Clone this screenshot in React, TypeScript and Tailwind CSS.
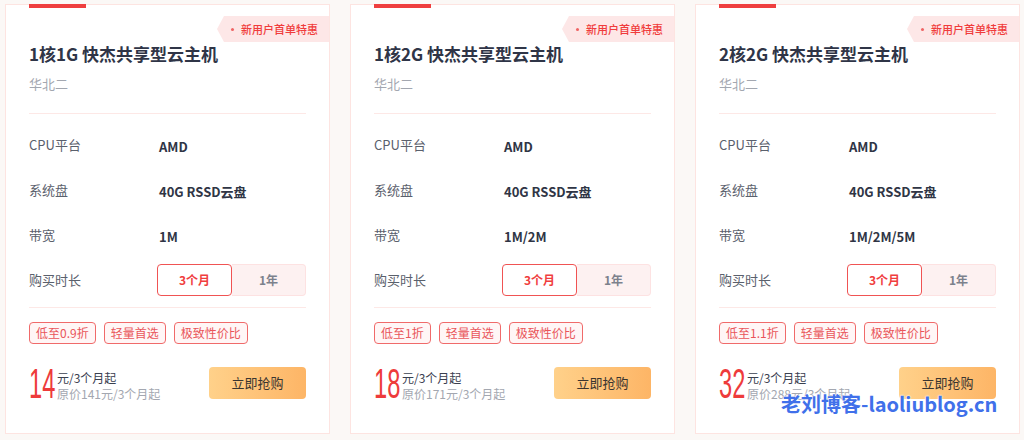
import React from "react";

type Plan = {
  title: string;
  bandwidth: string;
  discount: string;
  price: string;
  original: string;
};

const PLANS: Plan[] = [
  { title: "1核1G 快杰共享型云主机", bandwidth: "1M", discount: "低至0.9折", price: "14", original: "原价141元/3个月起" },
  { title: "1核2G 快杰共享型云主机", bandwidth: "1M/2M", discount: "低至1折", price: "18", original: "原价171元/3个月起" },
  { title: "2核2G 快杰共享型云主机", bandwidth: "1M/2M/5M", discount: "低至1.1折", price: "32", original: "原价288元/3个月起" },
];

function Row({ label, children }: { label: string; children: React.ReactNode }) {
  return (
    <div className="flex h-[45px] items-center">
      <div className="w-[130px] text-[13px] text-[#5a606c]">{label}</div>
      <div className="flex-1">{children}</div>
    </div>
  );
}

function Card({ plan }: { plan: Plan }) {
  return (
    <div className="relative h-[430px] w-[325px] border border-[#fde4e1] bg-white px-[23px]">
      <div className="-mt-px h-1 w-[57px] bg-[#ef3f3f]" />

      <div className="absolute right-0 top-[11px] flex h-[26px] w-[112px] items-center bg-[#fde7e7] pl-[14px] [clip-path:polygon(7px_0,100%_0,100%_100%,7px_100%,0_50%)]">
        <span className="h-[3px] w-[3px] rounded-full bg-[#f06464]" />
        <span className="ml-[7px] text-[11px] font-medium text-[#f03c3c]">新用户首单特惠</span>
      </div>

      <div className="mt-[34px] text-[17px] font-bold leading-6 text-[#2f3547]">{plan.title}</div>
      <div className="mt-2 text-[13px] leading-5 text-[#a3a7b0]">华北二</div>
      <div className="mt-[19px] h-px bg-[#fde8e6]" />

      <div className="pt-2">
        <Row label="CPU平台">
          <span className="text-[13px] font-bold text-[#2f3545]">AMD</span>
        </Row>
        <Row label="系统盘">
          <span className="text-[13px] font-bold text-[#2f3545]">40G RSSD云盘</span>
        </Row>
        <Row label="带宽">
          <span className="text-[13px] font-bold text-[#2f3545]">{plan.bandwidth}</span>
        </Row>
        <Row label="购买时长">
          <div className="flex h-8">
            <div className="flex w-[75px] items-center justify-center rounded border border-[#f05353] bg-white text-[12px] font-bold text-[#f03e3e]">
              3个月
            </div>
            <div className="flex w-[74px] items-center justify-center rounded-r border border-l-0 border-[#fde2e2] bg-[#fdf1f1] text-[12px] font-bold text-[#7c818c]">
              1年
            </div>
          </div>
        </Row>
      </div>

      <div className="mt-[5px] h-px bg-[#fde8e6]" />

      <div className="mt-[14px] flex gap-2">
        {[plan.discount, "轻量首选", "极致性价比"].map((t) => (
          <span
            key={t}
            className="flex h-[22px] items-center rounded-sm border border-[#f06a6a] bg-[#fff6f6] px-[6px] text-[12px] text-[#e9555a]"
          >
            {t}
          </span>
        ))}
      </div>

      <div className="mt-[23px] flex h-8 items-center">
        <div className="relative h-8 w-[27px]">
          <span className="absolute left-0 top-1/2 origin-left -translate-y-1/2 scale-x-[0.55] font-['Liberation_Sans',sans-serif] text-[43px] leading-none text-[#ee3b3b]">
            {plan.price}
          </span>
        </div>
        <div className="ml-[1px] flex flex-col pt-[5px] text-[12px] leading-4">
          <span className="text-[#3a4050]">元/3个月起</span>
          <span className="text-[#a3a7b0]">{plan.original}</span>
        </div>
        <button className="ml-auto h-8 w-[97px] rounded-sm bg-gradient-to-r from-[#ffd18a] to-[#fdb566] text-[13px] text-[#3a3530]">
          立即抢购
        </button>
      </div>
    </div>
  );
}

export default function App() {
  return (
    <div className="relative h-[440px] w-[1024px] overflow-hidden bg-[#fbf8f6] font-['Noto_Sans_CJK_SC','Noto_Sans',sans-serif]">
      <div className="flex gap-5 px-[5px] pt-1">
        {PLANS.map((p) => (
          <Card key={p.title} plan={p} />
        ))}
      </div>
      <div className="absolute left-[781px] top-[392px] text-[20px] font-bold leading-6 text-[#4070ea] [text-shadow:0_0_2px_#fff,0_0_2px_#fff]">
        老刘博客-laoliublog.cn
      </div>
    </div>
  );
}
